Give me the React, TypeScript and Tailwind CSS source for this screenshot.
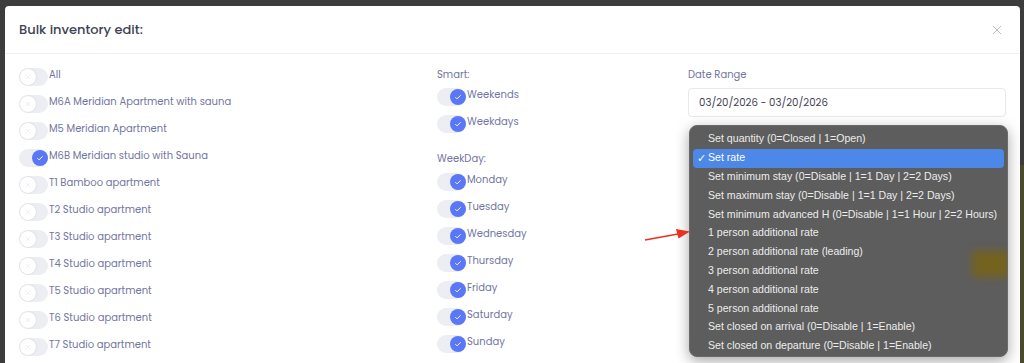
import React from 'react';

const rooms = [
  { name: 'All', on: false },
  { name: 'M6A Meridian Apartment with sauna', on: false },
  { name: 'M5 Meridian Apartment', on: false },
  { name: 'M6B Meridian studio with Sauna', on: true },
  { name: 'T1 Bamboo apartment', on: false },
  { name: 'T2 Studio apartment', on: false },
  { name: 'T3 Studio apartment', on: false },
  { name: 'T4 Studio apartment', on: false },
  { name: 'T5 Studio apartment', on: false },
  { name: 'T6 Studio apartment', on: false },
  { name: 'T7 Studio apartment', on: false },
];

const weekDays = ['Monday', 'Tuesday', 'Wednesday', 'Thursday', 'Friday', 'Saturday', 'Sunday'];

const options = [
  'Set quantity (0=Closed | 1=Open)',
  'Set rate',
  'Set minimum stay (0=Disable | 1=1 Day | 2=2 Days)',
  'Set maximum stay (0=Disable | 1=1 Day | 2=2 Days)',
  'Set minimum advanced H (0=Disable | 1=1 Hour | 2=2 Hours)',
  '1 person additional rate',
  '2 person additional rate (leading)',
  '3 person additional rate',
  '4 person additional rate',
  '5 person additional rate',
  'Set closed on arrival (0=Disable | 1=Enable)',
  'Set closed on departure (0=Disable | 1=Enable)',
];

const Toggle: React.FC<{ on: boolean }> = ({ on }) => (
  <div className="relative w-[29px] h-[18px] shrink-0 rounded-full bg-[#eceef3]">
    {on ? (
      <div className="absolute right-0 top-[1px] w-4 h-4 rounded-full bg-[#5a78f6] flex items-center justify-center">
        <svg viewBox="0 0 12 12" className="w-[8px] h-[8px]" fill="none" stroke="white" strokeWidth="1.4">
          <path d="M2 6.2l2.6 2.6L10 3.4" />
        </svg>
      </div>
    ) : (
      <div className="absolute left-[1px] top-[1px] w-4 h-4 rounded-full bg-white shadow-[0_0_2px_rgba(0,0,0,0.15)] flex items-center justify-center">
        <svg viewBox="0 0 12 12" className="w-[6px] h-[6px]" fill="none" stroke="#e3e5ec" strokeWidth="1.2">
          <path d="M2 2l8 8M10 2l-8 8" />
        </svg>
      </div>
    )}
  </div>
);

const SwitchRow: React.FC<{ label: string; on: boolean }> = ({ label, on }) => (
  <div className="flex items-start gap-[1px]">
    <Toggle on={on} />
    <span className="text-[10px] leading-[13px] text-[#7376a0]">{label}</span>
  </div>
);

export default function App() {
  return (
    <div className="relative w-[1024px] h-[363px] overflow-hidden bg-[#3c3c3c] font-['Poppins','Open_Sans',sans-serif]">
      {/* olive strip behind modal on the right */}
      <div className="absolute right-0 top-[165px] w-[6px] h-[198px] bg-[#4a4a2c]" />

      <div className="absolute left-[5px] top-[6px] w-[1015px] h-[380px] bg-white rounded-t-[4px]">
        {/* Header */}
        <div className="flex items-center justify-between h-[48px] pl-[14px] pr-[18px] border-b border-[#eceef3]">
          <h2 className="text-[13px] font-medium text-[#3f4254]">Bulk inventory edit:</h2>
          <svg viewBox="0 0 12 12" className="w-[10px] h-[10px]" fill="none" stroke="#b5b7c4" strokeWidth="1.1">
            <path d="M1 1l10 10M11 1L1 11" />
          </svg>
        </div>

        {/* Body */}
        <div className="grid grid-cols-[402px_235px_318px] gap-x-4 px-[14px] pt-[14px]">
          <div className="flex flex-col gap-[9px]">
            {rooms.map((r) => (
              <SwitchRow key={r.name} label={r.name} on={r.on} />
            ))}
          </div>

          <div className="flex flex-col">
            <span className="text-[10px] leading-[13px] text-[#7376a0]">Smart:</span>
            <div className="flex flex-col gap-[9px] mt-[7px]">
              <SwitchRow label="Weekends" on />
              <SwitchRow label="Weekdays" on />
            </div>
            <span className="text-[10px] leading-[13px] text-[#7376a0] mt-[19px]">WeekDay:</span>
            <div className="flex flex-col gap-[9px] mt-[8px]">
              {weekDays.map((d) => (
                <SwitchRow key={d} label={d} on />
              ))}
            </div>
          </div>

          <div className="relative flex flex-col">
            <span className="text-[10px] leading-[13px] text-[#7376a0]">Date Range</span>
            <div className="mt-[7px] h-[29px] border border-[#e6e8ee] rounded-[4px] flex items-center px-[10px]">
              <span className="text-[10.2px] text-[#3f4254]">03/20/2026 - 03/20/2026</span>
            </div>

            {/* native select popup */}
            <div className="absolute left-[1px] top-[57px] w-[319px] h-[232px] rounded-[8px] bg-[#5d5d5d] shadow-[0_4px_14px_rgba(0,0,0,0.35)] border border-[#6a6a6a] overflow-hidden pt-[4px] pb-[3px] px-[3px] font-['Liberation_Sans',sans-serif]">
              <div className="absolute left-[282px] top-[125px] w-[40px] h-[26px] bg-[#7b6410] blur-[4px] opacity-80" />
              {options.map((o) => {
                const active = o === 'Set rate';
                return (
                  <div
                    key={o}
                    className={`relative h-[18.8px] flex items-center rounded-[4px] whitespace-nowrap text-[10.6px] text-[#ececec] ${
                      active ? 'bg-[#4d87e8] text-white' : ''
                    }`}
                  >
                    <span className="w-[15px] pl-[4px] text-[11px]">{active ? '✓' : ''}</span>
                    <span>{o}</span>
                  </div>
                );
              })}
            </div>
          </div>
        </div>
      </div>

      {/* red arrow */}
      <svg className="absolute left-[640px] top-[224px] w-[56px] h-[22px]" viewBox="0 0 56 22">
        <path d="M5 16 L38 10" stroke="#e8321e" strokeWidth="1.6" fill="none" />
        <path d="M50 7.5 L36 5 L38.5 14.5 Z" fill="#e8321e" />
      </svg>
    </div>
  );
}
